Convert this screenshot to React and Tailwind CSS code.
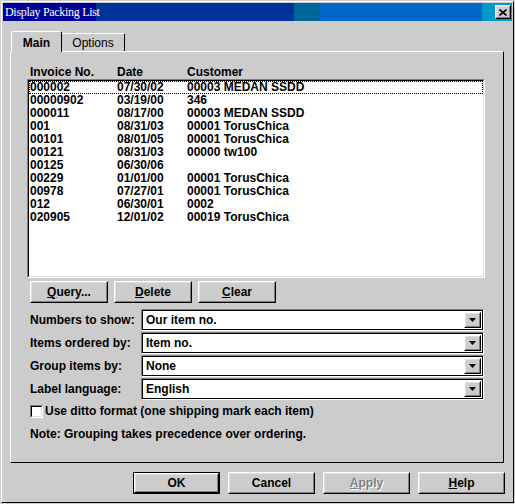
import React from 'react';

const rows = [
  ['000002', '07/30/02', '00003 MEDAN SSDD'],
  ['00000902', '03/19/00', '346'],
  ['000011', '08/17/00', '00003 MEDAN SSDD'],
  ['001', '08/31/03', '00001 TorusChica'],
  ['00101', '08/01/05', '00001 TorusChica'],
  ['00121', '08/31/03', '00000 tw100'],
  ['00125', '06/30/06', ''],
  ['00229', '01/01/00', '00001 TorusChica'],
  ['00978', '07/27/01', '00001 TorusChica'],
  ['012', '06/30/01', '0002'],
  ['020905', '12/01/02', '00019 TorusChica'],
];

function Bevel({ children, className = '' }) {
  return (
    <div className={`border border-t-white border-l-white border-r-black border-b-black ${className}`}>
      <div className="w-full h-full border border-t-[#dfdfdf] border-l-[#dfdfdf] border-r-[#808080] border-b-[#808080] flex items-center justify-center">
        {children}
      </div>
    </div>
  );
}

function PushButton({ children, wide }) {
  return (
    <Bevel className={wide ? 'w-[87px] h-[22px]' : 'w-[78px] h-[22px]'}>{children}</Bevel>
  );
}

function Combo({ value }) {
  return (
    <div className="w-[343px] h-[22px] border border-t-[#808080] border-l-[#808080] border-r-white border-b-white">
      <div className="w-full h-full border border-black bg-white flex items-center">
        <span className="flex-1 pl-[3px]">{value}</span>
        <Bevel className="w-[17px] h-[16px] mr-px bg-[#cccccc]">
          <svg width="7" height="4" viewBox="0 0 7 4">
            <path d="M0 0h7L3.5 4z" fill="#000" />
          </svg>
        </Bevel>
      </div>
    </div>
  );
}

function Row({ label, value }) {
  return (
    <div className="flex items-center">
      <div className="w-[114px] pl-[3px]">{label}</div>
      <Combo value={value} />
    </div>
  );
}

export default function App() {
  return (
    <div className="w-[515px] h-[504px] bg-[#cccccc] border border-[#cccccc] font-['Liberation_Sans',Arial,sans-serif] text-[12px] leading-[14px] font-bold text-black select-none">
      <div className="w-full h-full border border-t-white border-l-white border-r-black border-b-black p-px">
        {/* Title bar */}
        <div className="h-[18px] flex items-center bg-[linear-gradient(90deg,#000099_0px,#000099_93px,#003399_93px,#003399_291px,#006699_291px,#006699_317px,#0066cc_317px,#0066cc_479px,#0099cc_479px,#0099cc_100%)]">
          <span className="flex-1 pl-[2px] text-white font-normal font-['Liberation_Serif',serif] text-[12px] tracking-[-0.3px]">
            Display Packing List
          </span>
          <Bevel className="w-[16px] h-[14px] mr-px bg-[#cccccc]">
            <svg width="8" height="7" viewBox="0 0 8 7">
              <path d="M0.5 0.5L7.5 6.5M7.5 0.5L0.5 6.5" stroke="#000" strokeWidth="1.6" />
            </svg>
          </Bevel>
        </div>

        {/* Tabs */}
        <div className="mt-[10px] ml-[7px] pl-px h-[20px] flex items-end">
          <div className="relative z-10 -mb-px w-[51px] h-[21px] bg-[#cccccc] border-t border-l border-r border-t-white border-l-white border-r-black rounded-t-[2px] flex items-center justify-center pt-[2px]">
            Main
          </div>
          <div className="w-[63px] h-[18px] bg-[#cccccc] border-t border-r border-t-white border-r-black rounded-tr-[2px] flex items-center justify-center pt-px font-normal">
            Options
          </div>
        </div>

        {/* Panel */}
        <div className="ml-[7px] w-[494px] h-[412px] border border-t-white border-l-white border-r-black border-b-black pl-[16px]">
          <div className="mt-[13px] grid grid-cols-[87px_70px_1fr] pl-[3px]">
            <span>Invoice No.</span>
            <span>Date</span>
            <span>Customer</span>
          </div>
          <div className="w-[458px] h-[199px] border border-t-[#808080] border-l-[#808080] border-r-white border-b-white">
            <div className="w-full h-full border border-t-black border-l-black border-r-[#dfdfdf] border-b-[#dfdfdf] bg-white">
              {rows.map((r, i) => (
                <div
                  key={i}
                  className={`h-[13px] grid grid-cols-[87px_70px_1fr] items-center leading-[11px] border ${i === 0 ? 'border-dotted border-black' : 'border-transparent'}`}
                >
                  <span>{r[0]}</span>
                  <span>{r[1]}</span>
                  <span>{r[2]}</span>
                </div>
              ))}
            </div>
          </div>

          <div className="mt-[3px] pl-[3px] flex gap-[6px]">
            <PushButton><span><u>Q</u>uery...</span></PushButton>
            <PushButton><span><u>D</u>elete</span></PushButton>
            <PushButton><span><u>C</u>lear</span></PushButton>
          </div>

          <div className="mt-[6px] flex flex-col gap-px">
            <Row label="Numbers to show:" value="Our item no." />
            <Row label="Items ordered by:" value="Item no." />
            <Row label="Group items by:" value="None" />
            <Row label="Label language:" value="English" />
          </div>

          <div className="mt-[4px] pl-[3px] flex items-center gap-[2px]">
            <div className="w-[13px] h-[13px] border border-t-[#808080] border-l-[#808080] border-r-white border-b-white">
              <div className="w-full h-full border border-t-black border-l-black border-r-[#dfdfdf] border-b-[#dfdfdf] bg-white" />
            </div>
            <span>Use ditto format (one shipping mark each item)</span>
          </div>

          <div className="mt-[9px] pl-[3px]">Note: Grouping takes precedence over ordering.</div>
        </div>

        {/* Bottom buttons */}
        <div className="mt-[9px] pr-[7px] flex justify-end gap-[8px]">
          <div className="border border-black">
            <Bevel className="w-[85px] h-[20px]">OK</Bevel>
          </div>
          <PushButton wide>Cancel</PushButton>
          <PushButton wide>
            <span className="text-[#808080] [text-shadow:1px_1px_0_#ffffff]"><u>A</u>pply</span>
          </PushButton>
          <PushButton wide><span><u>H</u>elp</span></PushButton>
        </div>
      </div>
    </div>
  );
}
